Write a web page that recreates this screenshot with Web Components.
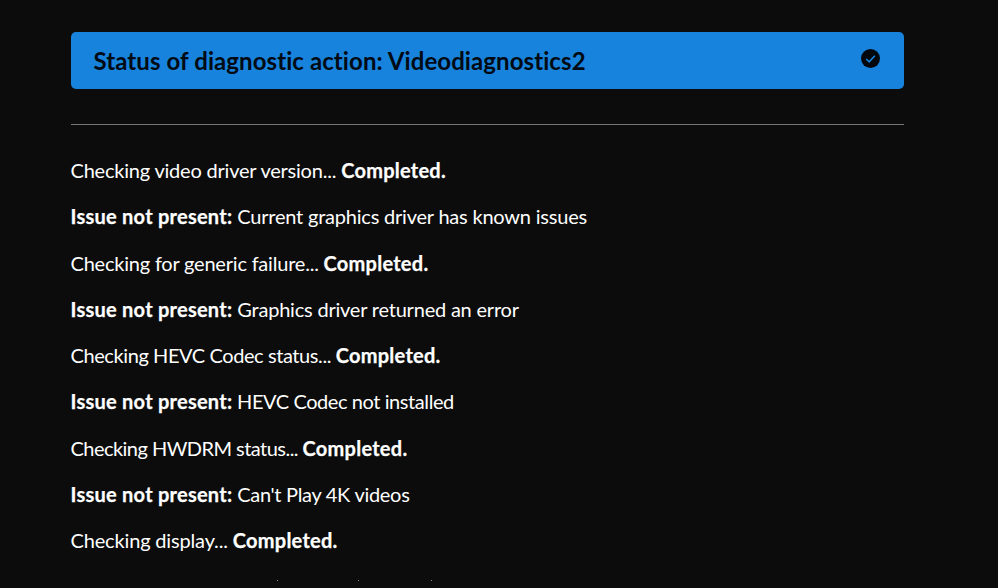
<!DOCTYPE html>
<html lang="en">
<head>
<meta charset="utf-8">
<title>Diagnostics status</title>
<style>
  html, body { margin: 0; height: 100%; overflow: hidden; background: #0c0c0c; }
  body { font-family: Lato, "Open Sans", sans-serif; color: #fff; }
</style>
</head>
<body>
<diag-page>
  <status-banner>Status of diagnostic action: Videodiagnostics2</status-banner>
  <diag-line>Checking video driver version... <b>Completed.</b></diag-line>
  <diag-line><b>Issue not present:</b> Current graphics driver has known issues</diag-line>
  <diag-line>Checking for generic failure... <b>Completed.</b></diag-line>
  <diag-line><b>Issue not present:</b> Graphics driver returned an error</diag-line>
  <diag-line style="--track:-0.41px">Checking HEVC Codec status... <b>Completed.</b></diag-line>
  <diag-line style="--track:-0.42px"><b>Issue not present:</b> HEVC Codec not installed</diag-line>
  <diag-line style="--track:-0.54px">Checking HWDRM status... <b>Completed.</b></diag-line>
  <diag-line style="--track:-0.3px"><b>Issue not present:</b> Can't Play 4K videos</diag-line>
  <diag-line style="--track:-0.16px">Checking display... <b>Completed.</b></diag-line>
</diag-page>
<script>
class DiagPage extends HTMLElement {
  constructor() {
    super();
    this.attachShadow({ mode: "open" });
    this.shadowRoot.innerHTML = `
      <style>
        :host { display: block; width: 833px; padding: 32px 0 0 70.5px; }
        hr { border: none; height: 1px; background: #777; margin: 35.5px 0 22px; }
        .lines { display: flex; flex-direction: column; }
        .cut { display: flex; height: 3px; padding-top: 17px; }
        .cut i { width: 1px; height: 1px; background: #8a8a8a; }
      </style>
      <slot name="banner"></slot>
      <hr>
      <div class="lines"><slot></slot></div>
      <div class="cut">
        <i style="margin-left:206px"></i>
        <i style="margin-left:80px"></i>
        <i style="margin-left:72px"></i>
      </div>
    `;
  }
  connectedCallback() {
    const banner = this.querySelector("status-banner");
    if (banner) banner.slot = "banner";
  }
}

class StatusBanner extends HTMLElement {
  constructor() {
    super();
    this.attachShadow({ mode: "open" });
    this.shadowRoot.innerHTML = `
      <style>
        :host {
          display: flex; align-items: center; justify-content: space-between;
          box-sizing: border-box; height: 56.5px; padding: 1px 24px 0 23px;
          background: #1783dc; border-radius: 5px; color: #020a14;
          font-size: 24px; font-weight: 700; letter-spacing: 0.08px;
          font-variant-ligatures: none;
        }
        svg { display: block; margin: -4px 0 0 0; }
      </style>
      <span><slot></slot></span>
      <svg width="19" height="19" viewBox="0 0 19 19">
        <circle cx="9.5" cy="9.5" r="9.5" fill="#02070d"/>
        <path d="M5.2 10l3 2.8 5.6-6" fill="none" stroke="#1783dc" stroke-width="1.6"/>
      </svg>
    `;
  }
}

class DiagLine extends HTMLElement {
  constructor() {
    super();
    this.attachShadow({ mode: "open" });
    this.shadowRoot.innerHTML = `
      <style>
        :host {
          display: block; height: 46.25px; line-height: 46.25px;
          font-size: 20px; color: #fff; white-space: nowrap;
          letter-spacing: var(--track, -0.21px); font-variant-ligatures: none;
        }
        ::slotted(b) { letter-spacing: 0.25px; -webkit-text-stroke: 0.25px #fff; }
      </style>
      <slot></slot>
    `;
  }
}

customElements.define("diag-page", DiagPage);
customElements.define("status-banner", StatusBanner);
customElements.define("diag-line", DiagLine);
</script>
</body>
</html>
